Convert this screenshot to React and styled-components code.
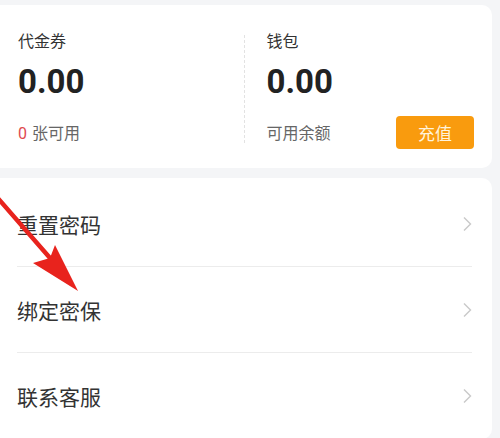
import React from 'react'
import styled, { createGlobalStyle } from 'styled-components'

const GlobalStyle = createGlobalStyle`
  html, body {
    margin: 0;
    padding: 0;
    background: #f4f5f7;
    font-family: Roboto, "Noto Sans CJK SC", sans-serif;
  }
`

const Page = styled.div`
  position: relative;
  width: 500px;
  height: 438px;
  overflow: hidden;
  background: #f4f5f7;
  padding-top: 5px;
  box-sizing: border-box;
`

const Card = styled.div`
  width: 492px;
  background: #fff;
  border-radius: 0 10px 10px 0;
`

const Wallet = styled(Card)`
  height: 163px;
  display: flex;
  align-items: stretch;
`

const Column = styled.div`
  flex: 1;
  display: flex;
  flex-direction: column;
  padding: 24px 18px 0 ${(p) => p.$left}px;
`

const Divider = styled.div`
  width: 0;
  margin: 30px 0 25px;
  border-left: 1px dashed #e2e2e2;
`

const Label = styled.div`
  font-family: "Noto Sans CJK SC", sans-serif;
  font-size: 16px;
  line-height: 22px;
  color: #333;
`

const Amount = styled.div`
  font-family: Roboto, sans-serif;
  font-weight: 700;
  font-size: 33px;
  line-height: 40px;
  color: #222;
  margin-top: 11px;
`

const Footer = styled.div`
  display: flex;
  align-items: center;
  justify-content: space-between;
  margin-top: 13px;
  height: 34px;
`

const Sub = styled.div`
  font-family: "Noto Sans CJK SC", sans-serif;
  font-size: 16px;
  color: #666;
`

const Red = styled.span`
  color: #e04a4f;
  font-family: Roboto, sans-serif;
  margin-right: 5px;
`

const Button = styled.button`
  width: 78px;
  height: 33px;
  border: none;
  border-radius: 4px;
  background: #f99b0e;
  color: #fff3dc;
  font-family: "Noto Sans CJK SC", sans-serif;
  font-size: 17px;
  padding: 0;
`

const Menu = styled(Card)`
  margin-top: 10px;
  padding-top: 3px;
`

const Row = styled.div`
  height: 86px;
  margin-left: 17px;
  margin-right: 20px;
  display: flex;
  align-items: center;
  justify-content: space-between;
  border-bottom: ${(p) => (p.$last ? 'none' : '1px solid #ececec')};
  box-sizing: border-box;
`

const RowText = styled.div`
  font-family: "Noto Sans CJK SC", sans-serif;
  font-size: 21px;
  color: #333;
`

const Arrow = styled.svg`
  position: absolute;
  left: 0;
  top: 0;
  pointer-events: none;
`

const Chevron = () => (
  <svg width="10" height="16" viewBox="0 0 10 16">
    <path d="M2 1.5 L8.5 8 L2 14.5" fill="none" stroke="#c9c9c9" strokeWidth="1.4" />
  </svg>
)

export default function App() {
  const items = ['重置密码', '绑定密保', '联系客服']
  return (
    <Page>
      <GlobalStyle />
      <Wallet>
        <Column $left={18}>
          <Label>代金券</Label>
          <Amount>0.00</Amount>
          <Footer>
            <Sub>
              <Red>0</Red>张可用
            </Sub>
          </Footer>
        </Column>
        <Divider />
        <Column $left={22}>
          <Label>钱包</Label>
          <Amount>0.00</Amount>
          <Footer>
            <Sub>可用余额</Sub>
            <Button>充值</Button>
          </Footer>
        </Column>
      </Wallet>
      <Menu>
        {items.map((t, i) => (
          <Row key={t} $last={i === items.length - 1}>
            <RowText>{t}</RowText>
            <Chevron />
          </Row>
        ))}
      </Menu>
      <Arrow width="500" height="438" viewBox="0 0 500 438">
        <line x1="-4" y1="196" x2="50" y2="258" stroke="#e8231d" strokeWidth="4.5" strokeLinecap="round" />
        <polygon points="78,291 33,263 50,258 55,245" fill="#e8231d" />
      </Arrow>
    </Page>
  )
}
